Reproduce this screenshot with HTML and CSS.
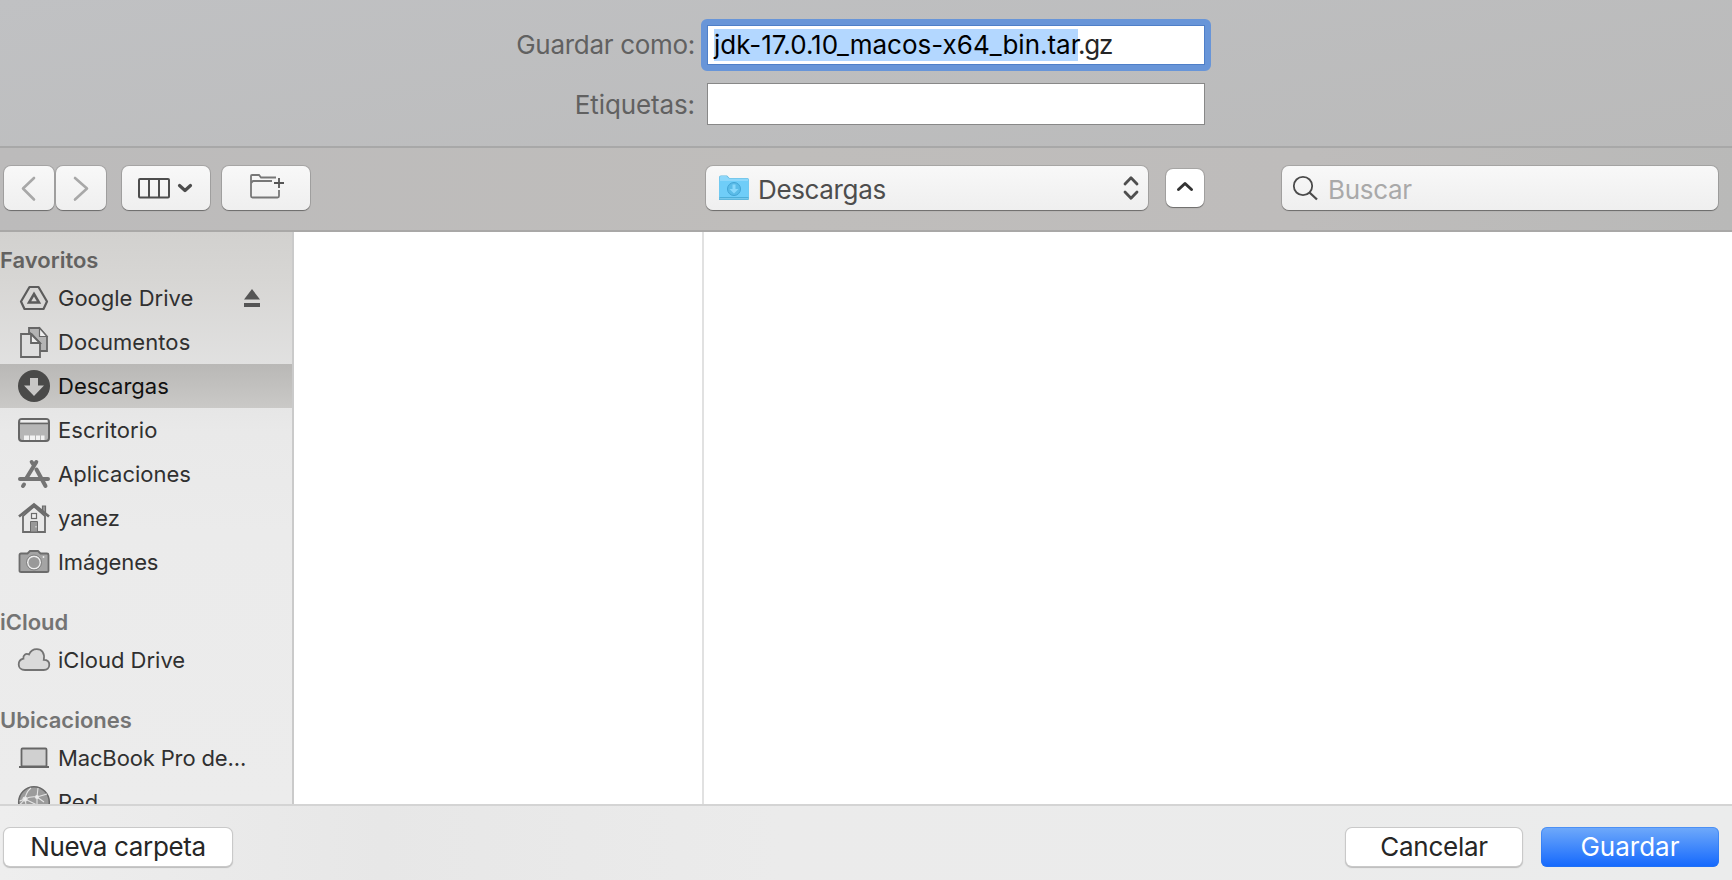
FILE: index.html
```html
<!DOCTYPE html>
<html lang="es">
<head>
<meta charset="utf-8">
<title>Guardar como</title>
<link rel="stylesheet" href="styles.css">
</head>
<body>
<div class="dialog">
  <header class="fields">
    <label class="label label-name"><span class="t-guardarcomo">Guardar como:</span></label>
    <div class="input input-focus"><span class="selected">jdk-17.0.10_macos-x64_bin.tar</span><span class="rest">.gz</span></div>
    <label class="label label-tags"><span class="t-etiquetas">Etiquetas:</span></label>
    <div class="input"></div>
  </header>

  <div class="toolbar">
    <div class="btn nav"><svg width="50" height="44" fill="none" stroke="#a8a8a8" stroke-width="2.6" stroke-linecap="round" stroke-linejoin="round"><path d="M30 12 19 22.500 30 33.500"/></svg></div>
    <div class="btn nav nav-next"><svg width="50" height="44" fill="none" stroke="#a8a8a8" stroke-width="2.6" stroke-linecap="round" stroke-linejoin="round"><path d="M19 12 31 22.500 19 33.500"/></svg></div>
    <div class="btn view"><svg width="88" height="44" fill="none" stroke="#4d4d4d" stroke-width="2"><rect x="17" y="13" width="30" height="18.500" rx="1"/><path d="M27 13v18.500M37 13v18.500"/><path d="M57.500 19.500l5.500 5 5.500-5" stroke-width="3.200" stroke-linecap="round" stroke-linejoin="round"/></svg></div>
    <div class="btn newfolder"><svg width="88" height="44" fill="none" stroke="#777" stroke-width="1.800"><path d="M54 11.500H39l-2-2.500H30q-1 0-1 1V30q0 1.500 1.500 1.500H55.500q1.500 0 1.500-1.500V24M29 17l2-2H50"/><path d="M57 12v10M52 17h10" stroke="#555"/></svg></div>
    <div class="btn location">
      <svg class="folder" width="32" height="28"><path d="M1 26V3.500Q1 1.500 3 1.500H9L11.500 4H29Q31 4 31 6V25Q31 26 30 26Z" fill="#5fb8de"/><path d="M1.500 24.500V3.500Q1.500 2 3 2H8.500L11 4.500H29Q30.500 4.500 30.500 6V24.500Z" fill="#8dd7fa"/><path d="M1.500 7H30.500V23H1.500Z" fill="#6fcdf8"/><path d="M1.500 23.500h29" stroke="#4eafd9"/><circle cx="16" cy="15" r="6.500" fill="#5bbce8" stroke="#43a5d5"/><path d="M14.500 10.500h3V15h3L16 19.500 11.500 15h3Z" fill="#89d8fc"/></svg>
      <span class="t-descargas">Descargas</span>
      <svg class="updown" width="18" height="26" fill="none" stroke="#4f4f4f" stroke-width="2.800" stroke-linecap="round" stroke-linejoin="round"><path d="M3 9 9 2.800 15 9M3 17l6 6.200L15 17"/></svg>
    </div>
    <div class="btn collapse"><svg width="38" height="38" fill="none" stroke="#333" stroke-width="3" stroke-linecap="round" stroke-linejoin="round"><path d="M12.500 20.500 19 14.500l6.500 6"/></svg></div>
    <div class="btn search"><svg width="28" height="28" fill="none" stroke="#4b4b4b" stroke-width="1.800"><circle cx="11" cy="12" r="9.200"/><path d="M17.500 18.500l7.500 7" stroke-width="2.300"/></svg><span class="t-buscar">Buscar</span></div>
  </div>

  <main class="browser">
    <nav class="sidebar">
      <h2 class="h-fav">Favoritos</h2>
      <div class="row"><svg class="ico" viewBox="0 0 34 34" fill="none" stroke="#5c5c5c" stroke-width="2.200"><path d="M12.500 6h9l8.500 14.500-3.500 7.500H7.500L4 20.500Z" stroke-linejoin="round"/><path d="M17 13l5 8.500h-10Z" stroke-width="2.500"/></svg><span class="n-google">Google Drive</span><svg class="eject" width="18" height="20" fill="#555"><path d="M9 1l8 10.500H1ZM1 15h16v4H1Z"/></svg></div>
      <div class="row"><svg class="ico" viewBox="0 0 34 34" stroke="#666" stroke-width="1.800"><path d="M12 3h10.500l7.500 8.500V26H12Z" fill="#b4b4b4"/><path d="M22.500 3v8.500H30Z" fill="#eee" stroke-width="1.200"/><path d="M4 9h10.500l8.500 9v14H4Z" fill="#dedede"/><path d="M14 9v9h9Z" fill="#eee"/></svg><span class="n-doc">Documentos</span></div>
      <div class="row active"><svg class="ico" viewBox="0 0 34 34"><circle cx="17" cy="17" r="16" fill="#4a4a49"/><path d="M13 9h8v7.500h6L17 27 7 16.500h6Z" fill="#c8c7c6"/></svg><span class="n-desc">Descargas</span></div>
      <div class="row"><svg class="ico" viewBox="0 0 34 34" stroke="#666" stroke-width="2"><rect x="2" y="6" width="30" height="22" rx="3" fill="#b6b6b6"/><path d="M3.500 7h27v2.500h-27Z" fill="#eee" stroke="none"/><path d="M2 10.500h30" stroke-width="1.500"/><path d="M7 22.500h5v4.500H7Zm6 0h5v4.500h-5Zm6 0h4v4.500h-4Zm5 0h3.500v4.500h-3.500Z" fill="#f2f2f2" stroke="none"/></svg><span class="n-esc">Escritorio</span></div>
      <div class="row"><svg class="ico" viewBox="0 0 34 34" stroke="#747474" stroke-linecap="round" fill="none" stroke-width="4"><path d="M3 22h28"/><path d="M19.300 5 9.500 21M14.700 5l2 3M19.500 12.500 28.500 29M7 27.500l-1 1.500"/></svg><span class="n-apl">Aplicaciones</span></div>
      <div class="row"><svg class="ico" viewBox="0 0 34 34" stroke="#6c6c6c" stroke-width="2"><path d="M25.500 12V5h3v9" fill="#999" stroke-width="1.200"/><path d="M6 15 17 5.500 28 15V31H6Z" fill="#e9e9e9" stroke-width="1.800"/><path d="M2 15.500 17 3.500l15 12" fill="none" stroke-width="2.700"/><rect x="14.500" y="12.500" width="5" height="5" fill="#eee" stroke-width="1.200"/><path d="M13.500 31V20.500h7V31Z" fill="#999" stroke-width="1"/><path d="M19 25v1.500" stroke="#eee" stroke-width="1"/></svg><span class="n-yan">yanez</span></div>
      <div class="row"><svg class="ico" viewBox="0 0 34 34" stroke="#6c6c6c" stroke-width="1.800"><path d="M4 8.500h6.500l2.500-2.500h8l2.500 2.500H30q1.500 0 1.500 1.500V26q0 1-1.500 1H4q-1.500 0-1.500-1V10Q2.500 8.500 4 8.500Z" fill="#a4a4a4"/><circle cx="17" cy="17.500" r="6.300" fill="#999" stroke="#eee" stroke-width="1.500"/><circle cx="17" cy="17.500" r="7.500" fill="none" stroke="#777" stroke-width=".8"/><circle cx="26.500" cy="12" r=".9" fill="#eee" stroke="none"/></svg><span class="n-img">Imágenes</span></div>
      <h2 class="h-cloud">iCloud</h2>
      <div class="row"><svg class="ico" viewBox="0 0 34 34" fill="#dadada" stroke="#737373" stroke-width="1.800"><path d="M8 27C4 27 1.700 24.500 1.700 21.500c0-3 2-5.200 4.700-5.800C5.800 12 8.800 10 12 11.500 13.500 8 16.500 6.200 19.800 6.200c5 0 8.200 4 7 10.600 3.200 0 5.500 1.900 5.500 5 0 3-2.300 5.200-5.500 5.200Z"/></svg><span class="n-icd">iCloud Drive</span></div>
      <h2 class="h-ubi">Ubicaciones</h2>
      <div class="row"><svg class="ico" viewBox="0 0 34 34" fill="#d0d0d0" stroke="#666" stroke-width="1.800"><rect x="4.500" y="7.500" width="25" height="18" rx="1"/><path d="M2 26h30" stroke-width="2"/></svg><span class="n-mac">MacBook Pro de...</span></div>
      <div class="row"><svg class="ico" viewBox="0 0 34 34" fill="none" stroke="#e5e5e5" stroke-width="1.100"><circle cx="17" cy="17" r="15.300" fill="#9b9b9b" stroke="#686868" stroke-width="1.500"/><path d="M2.500 16 8 14Q14 11 20 12L30 9M8 14Q9 7 14 3M8 14l12 6M20 12l1-9M20 12l7 5M20 12v8M8 14l3 17M20 20l3 11M2.500 20 8 14"/><circle cx="8" cy="14" r="2" fill="#eee"/><circle cx="20" cy="12" r="1.500" fill="#eee"/></svg><span class="n-red">Red</span></div>
    </nav>
    <section class="column"></section>
    <section class="content"></section>
  </main>

  <footer class="footer">
    <div class="push new"><span class="t-nueva">Nueva carpeta</span></div>
    <div class="push cancel"><span class="t-cancelar">Cancelar</span></div>
    <div class="push save"><span class="t-guardar">Guardar</span></div>
  </footer>
</div>
</body>
</html>
```

FILE: styles.css
```css
* { box-sizing: border-box; }
body { margin: 0; font-family: Inter, "Liberation Sans", sans-serif; font-size: 26px; color: #262626; }
svg { display: block; flex: none; }
span { white-space: pre; }
.dialog { width: 1732px; height: 880px; overflow: hidden; display: grid; grid-template-rows: 148px 84px 574px 74px; background: #bdbcbb; }

.fields { display: grid; grid-template-columns: 695px 498px; grid-template-rows: 40px 42px; column-gap: 12px; row-gap: 18px; padding-top: 25px; background: linear-gradient(170deg, #c0c1c3, #bababa); border-bottom: 2px solid #a8a8a8; }
.label { text-align: right; line-height: 40px; color: #616161; }
.label-tags { line-height: 44px; }
.t-guardarcomo { letter-spacing: -.3px; }
.t-etiquetas { letter-spacing: -.12px; }
.input { background: #fff; border: 1px solid #888; line-height: 32px; display: flex; align-items: flex-start; padding: 3px 0 0 6px; }
.input-focus { position: relative; border-color: #4f7fc8; height: 40px; }
.input-focus::after { content: ""; position: absolute; inset: -7px; border: 6px solid #6895d8; border-radius: 6px; }
.selected { background: #b3d7ff; color: #000; width: 364px; height: 32px; }
.rest { letter-spacing: -1.2px; }

.toolbar { display: flex; align-items: flex-start; padding: 18px 0 0 4px; background: linear-gradient(100deg, #bcbbbb, #bfbdbb 45%, #bebcbb 75%, #b9b9b8); border-bottom: 2px solid #a9a8a7; }
.btn { flex: none; height: 44px; border-radius: 7px; background: linear-gradient(#f8f8f8, #efefef); box-shadow: 0 0 0 1px rgba(0,0,0,.12), 0 1px 1px rgba(0,0,0,.35); display: flex; align-items: center; overflow: hidden; }
.nav { width: 50px; }
.nav-next { margin-left: 2px; }
.view { width: 88px; margin-left: 16px; }
.newfolder { width: 88px; margin-left: 12px; }
.location { width: 442px; margin-left: 396px; padding-left: 12px; color: #4d4d4d; }
.folder { margin-right: 8px; }
.t-descargas { letter-spacing: -.35px; padding-top: 2px; }
.updown { margin-left: auto; margin-right: 8px; }
.collapse { width: 38px; height: 38px; margin: 3px 0 0 18px; background: #fff; }
.search { width: 436px; margin-left: 78px; padding-left: 10px; color: #a9a9a9; }
.t-buscar { margin-left: 8px; padding-top: 2px; letter-spacing: -.3px; }

.browser { display: grid; grid-template-columns: 294px 410px 1fr; background: #fff; overflow: hidden; border-bottom: 2px solid #d4d4d4; }
.sidebar { height: 572px; overflow: hidden; font-size: 22px; background: linear-gradient(#d2d1cf, #d7d6d4 50px, #e3e3e3 150px, #e9e9e9 200px, #ebebeb 300px, #ececec); border-right: 2px solid #cacaca; color: #303030; }
.sidebar h2 { margin: 0; font-size: 22px; font-weight: 600; line-height: 28px; white-space: pre; }
.h-fav { padding-top: 14px; height: 44px; color: #636261; }
.h-cloud { padding-top: 24px; height: 54px; color: #747474; }
.h-ubi { padding-top: 24px; height: 54px; color: #747474; }
.row { height: 44px; display: flex; align-items: center; padding-left: 17px; }
.ico { width: 34px; height: 34px; margin-right: 7px; }
.active { background: linear-gradient(#b9b8b6, #cac9c7); color: #111; }
.n-doc, .n-esc { letter-spacing: .08px; }
.n-yan, .n-img { letter-spacing: -.12px; }
.n-mac { letter-spacing: -.14px; }
.eject { margin-left: auto; margin-right: 31px; }
.column { border-right: 2px solid #e1e1e1; }

.footer { display: flex; padding: 22px 13px 0 4px; background: linear-gradient(90deg, #eeeeee, #e7e7e7 22%, #ebebeb 45%, #ebecec); }
.push { height: 38px; border-radius: 6px; background: #fff; box-shadow: 0 0 0 1px #c9c9c9, 0 1px 1px 1px #bcbcbc; display: flex; align-items: center; justify-content: center; padding-bottom: 2px; }
.new { width: 228px; }
.t-nueva { letter-spacing: -.35px; }
.cancel { width: 176px; margin-left: auto; }
.t-cancelar { letter-spacing: -.25px; }
.save { width: 178px; height: 40px; margin: -1px 0 0 19px; color: #fff; background: linear-gradient(#70aafa, #1468fd); box-shadow: inset 0 0 0 1px rgba(40,120,240,.5); }
```
